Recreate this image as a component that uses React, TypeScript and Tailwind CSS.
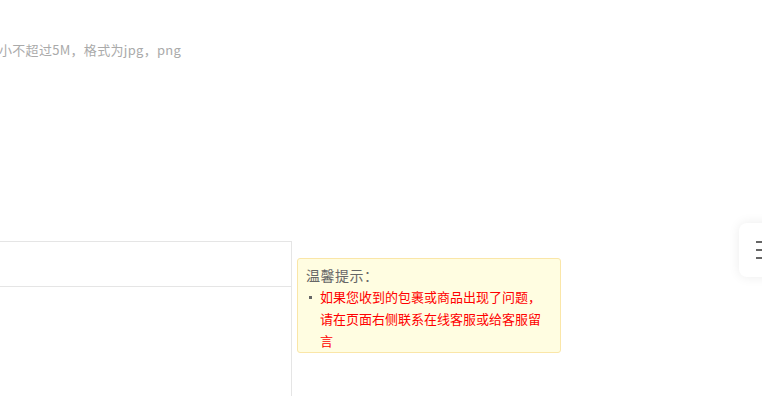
export default function App() {
  return (
    <div
      className="relative h-[396px] w-[762px] overflow-hidden bg-white"
      style={{ fontFamily: '"Microsoft YaHei", "Noto Sans CJK SC", sans-serif' }}
    >
      <div className="pt-[41px] text-[13px] leading-[18px] tracking-[0.3px] text-[#aaaaaa] -ml-[1px]">
        小不超过5M，格式为jpg，png
      </div>

      <div className="mt-[182px] flex items-start">
        <div className="-ml-px h-[200px] w-[293px] border border-b-0 border-[#e5e5e5]">
          <div className="h-[45px] border-b border-[#e5e5e5]" />
        </div>

        <div className="ml-[5px] mt-[17px] w-[264px] rounded-[3px] border border-[#fae6a8] bg-[#fffde1] px-[8px] pt-[5px]">
          <div className="text-[14px] leading-[22px] tracking-[0.5px] text-[#666666]">温馨提示：</div>
          <ul>
            <li className="relative pl-[14px] text-[13px] leading-[22px] text-[#ff0000]">
              <span className="absolute left-[3px] top-[10px] h-[3px] w-[3px] bg-[#666666]" />
              如果您收到的包裹或商品出现了问题，请在页面右侧联系在线客服或给客服留言
            </li>
          </ul>
        </div>
      </div>

      <div className="absolute left-[739px] top-[223px] flex h-[54px] w-[48px] flex-col justify-center gap-[6px] rounded-[8px] bg-white pl-[17px] shadow-[0_0_12px_rgba(0,0,0,0.08)]">
        <span className="h-[2px] w-[14px] bg-[#666666]" />
        <span className="h-[2px] w-[14px] bg-[#666666]" />
        <span className="h-[2px] w-[14px] bg-[#666666]" />
      </div>
    </div>
  );
}
